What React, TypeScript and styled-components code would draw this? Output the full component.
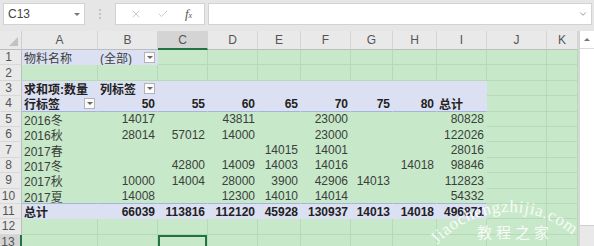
import React from 'react'
import styled, { createGlobalStyle } from 'styled-components'
import { Check, ChevronDown, X } from 'lucide-react'

const GlobalStyle = createGlobalStyle`
  html, body {
    margin: 0;
    padding: 0;
    background: #e6e6e6;
  }
  body {
    font-family: "Liberation Sans", "Noto Sans CJK SC", sans-serif;
  }
`

type Zone = 'blue' | 'plain' | 'grid'
type CellDef = { v: string; bold?: boolean; right?: boolean; dd?: boolean } | null

const COL_WIDTHS = [76, 60, 50, 50, 43, 50, 42, 44, 50, 60, 31]
const LETTERS = ['A', 'B', 'C', 'D', 'E', 'F', 'G', 'H', 'I', 'J', 'K']
const SELECTED_COL = 2
const SELECTED_ROW = 13

const n = (v: string): CellDef => ({ v, right: true })
const nb = (v: string): CellDef => ({ v, right: true, bold: true })
const t = (v: string): CellDef => ({ v })

const DATA: Record<number, CellDef[]> = {
  1: [t('物料名称'), { v: '(全部)', dd: true }],
  3: [{ v: '求和项:数量', bold: true }, { v: '列标签', bold: true, dd: true }],
  4: [
    { v: '行标签', bold: true, dd: true },
    nb('50'), nb('55'), nb('60'), nb('65'), nb('70'), nb('75'), nb('80'),
    { v: '总计', bold: true },
  ],
  5: [t('2016冬'), n('14017'), null, n('43811'), null, n('23000'), null, null, n('80828')],
  6: [t('2016秋'), n('28014'), n('57012'), n('14000'), null, n('23000'), null, null, n('122026')],
  7: [t('2017春'), null, null, null, n('14015'), n('14001'), null, null, n('28016')],
  8: [t('2017冬'), null, n('42800'), n('14009'), n('14003'), n('14016'), null, n('14018'), n('98846')],
  9: [t('2017秋'), n('10000'), n('14004'), n('28000'), n('3900'), n('42906'), n('14013'), null, n('112823')],
  10: [t('2017夏'), n('14008'), null, n('12300'), n('14010'), n('14014'), null, null, n('54332')],
  11: [
    { v: '总计', bold: true },
    nb('66039'), nb('113816'), nb('112120'), nb('45928'), nb('130937'), nb('14013'), nb('14018'), nb('496871'),
  ],
}

const zoneOf = (row: number, col: number): Zone => {
  if (row === 1 && col < 2) return 'blue'
  if ((row === 3 || row === 4 || row === 11) && col < 9) return 'blue'
  if (row >= 5 && row <= 10 && col < 9) return 'plain'
  return 'grid'
}

const Window = styled.div`
  position: relative;
  width: 594px;
  height: 246px;
  overflow: hidden;
  display: flex;
  flex-direction: column;
  background: #e6e6e6;
`

const FormulaBar = styled.div`
  height: 31px;
  flex: none;
  display: flex;
  align-items: flex-start;
  padding: 3px 2px 0 3px;
  box-sizing: border-box;
  gap: 3px;
`

const Box = styled.div<{ $w?: number }>`
  height: 22px;
  box-sizing: border-box;
  background: #fff;
  border: 1px solid #d2d2d2;
  display: flex;
  align-items: center;
  ${p => (p.$w ? `width: ${p.$w}px;` : 'flex: 1;')}
`

const NameText = styled.span`
  flex: 1;
  padding-left: 4px;
  font-size: 12px;
  color: #444;
`

const Caret = styled.span`
  width: 0;
  height: 0;
  margin-right: 4px;
  border-left: 3px solid transparent;
  border-right: 3px solid transparent;
  border-top: 3px solid #777;
`

const Grip = styled.div`
  width: 24px;
  height: 22px;
  display: flex;
  flex-direction: column;
  align-items: center;
  justify-content: center;
  gap: 2px;
`

const Dot = styled.span`
  width: 2px;
  height: 2px;
  background: #c4c4c4;
`

const Tools = styled(Box)`
  justify-content: space-around;
  padding: 0 4px 0 6px;
  color: #b4b4b4;
`

const Fx = styled.span`
  font-family: "Liberation Serif", serif;
  font-style: italic;
  font-size: 13px;
  color: #555;
  & > small {
    font-size: 8px;
  }
`

const FormulaInput = styled(Box)`
  justify-content: flex-end;
  padding-right: 3px;
  color: #666;
`

const Sheet = styled.div`
  flex: 1;
  display: flex;
  min-height: 0;
`

const Grid = styled.div`
  width: 578px;
  display: grid;
  grid-template-columns: 22px ${COL_WIDTHS.map(w => `${w}px`).join(' ')};
  grid-template-rows: 19px repeat(13, 15.4px);
  align-content: start;
`

const Corner = styled.div`
  background: #e9e9e9;
  border-right: 1px solid #cfcfcf;
  border-bottom: 1px solid #bdbdbd;
  box-sizing: border-box;
  display: flex;
  align-items: flex-end;
  justify-content: flex-end;
  padding: 0 3px 3px 0;
`

const CornerMark = styled.span`
  width: 0;
  height: 0;
  border-left: 9px solid transparent;
  border-bottom: 9px solid #c2c2c2;
`

const ColHead = styled.div<{ $active: boolean }>`
  box-sizing: border-box;
  display: flex;
  align-items: center;
  justify-content: center;
  font-size: 12px;
  color: #555;
  background: ${p => (p.$active ? '#d4d4d4' : '#e9e9e9')};
  border-right: 1px solid #d4d4d4;
  border-bottom: ${p => (p.$active ? '2px solid #217346' : '1px solid #bdbdbd')};
`

const RowHead = styled.div<{ $active: boolean }>`
  box-sizing: border-box;
  display: flex;
  align-items: center;
  justify-content: center;
  padding-right: 4px;
  font-size: 12px;
  color: #555;
  background: ${p => (p.$active ? '#d4d4d4' : '#e9e9e9')};
  border-bottom: 1px solid #d8d8d8;
  border-right: ${p => (p.$active ? '2px solid #217346' : '1px solid #bdbdbd')};
`

const Cell = styled.div<{
  $zone: Zone
  $right?: boolean
  $bold?: boolean
  $line?: string
  $selected?: boolean
}>`
  box-sizing: border-box;
  display: flex;
  align-items: center;
  justify-content: ${p => (p.$right ? 'flex-end' : 'space-between')};
  padding: 1px 2px 0;
  white-space: nowrap;
  font-size: 12px;
  font-weight: ${p => (p.$bold ? 700 : 400)};
  color: ${p => (p.$bold ? '#222' : '#3b3f3b')};
  background: ${p => (p.$zone === 'blue' ? '#dbe1f3' : '#c7e8c9')};
  border-right: 1px solid ${p => (p.$zone === 'grid' ? '#b6d9b8' : 'transparent')};
  border-bottom: 1px solid
    ${p => p.$line ?? (p.$zone === 'grid' ? '#b6d9b8' : 'transparent')};
  box-shadow: ${p => (p.$selected ? 'inset 0 0 0 2px #217346' : 'none')};
`

const DropButton = styled.span`
  width: 11px;
  height: 11px;
  box-sizing: border-box;
  background: #fbfbfb;
  border: 1px solid #b4b4b4;
  display: flex;
  align-items: center;
  justify-content: center;
  &::after {
    content: '';
    border-left: 3px solid transparent;
    border-right: 3px solid transparent;
    border-top: 3px solid #666;
  }
`

const Scrollbar = styled.div`
  flex: 1;
  display: flex;
  flex-direction: column;
  background: #e9e9e9;
  border-left: 2px solid #d6d6d6;
`

const ScrollUp = styled.div`
  height: 17px;
  background: #fff;
  border-bottom: 1px solid #dcdcdc;
  display: flex;
  align-items: center;
  justify-content: center;
  &::after {
    content: '';
    border-left: 3px solid transparent;
    border-right: 3px solid transparent;
    border-bottom: 3px solid #777;
  }
`

const Thumb = styled.div`
  height: 176px;
  background: #fff;
  border-bottom: 1px solid #cfcfcf;
`

const Watermark = styled.svg`
  position: absolute;
  left: 420px;
  top: 185px;
  overflow: visible;
  pointer-events: none;
`

const App: React.FC = () => {
  const rows = Array.from({ length: 13 }, (_, i) => i + 1)

  return (
    <Window>
      <GlobalStyle />
      <FormulaBar>
        <Box $w={82}>
          <NameText>C13</NameText>
          <Caret />
        </Box>
        <Grip>
          <Dot />
          <Dot />
          <Dot />
        </Grip>
        <Tools $w={90}>
          <X size={12} strokeWidth={1.4} />
          <Check size={12} strokeWidth={1.4} />
          <Fx>
            f<small>x</small>
          </Fx>
        </Tools>
        <FormulaInput>
          <ChevronDown size={10} strokeWidth={1.6} />
        </FormulaInput>
      </FormulaBar>

      <Sheet>
        <Grid>
          <Corner>
            <CornerMark />
          </Corner>
          {LETTERS.map((l, i) => (
            <ColHead key={l} $active={i === SELECTED_COL}>
              {l}
            </ColHead>
          ))}
          {rows.map(row => (
            <React.Fragment key={row}>
              <RowHead $active={row === SELECTED_ROW}>{row}</RowHead>
              {LETTERS.map((l, col) => {
                const def = DATA[row]?.[col] ?? null
                const zone = zoneOf(row, col)
                const line =
                  (row === 4 || row === 10) && col < 9 ? '#a3b4de' : undefined
                return (
                  <Cell
                    key={l}
                    $zone={zone}
                    $right={def?.right}
                    $bold={def?.bold}
                    $line={line}
                    $selected={row === SELECTED_ROW && col === SELECTED_COL}
                  >
                    {def && <span>{def.v}</span>}
                    {def?.dd && <DropButton />}
                  </Cell>
                )
              })}
            </React.Fragment>
          ))}
        </Grid>
        <Scrollbar>
          <ScrollUp />
          <Thumb />
        </Scrollbar>
      </Sheet>

      <Watermark width="174" height="61" viewBox="0 0 174 61">
        <defs>
          <path id="wm-arc" d="M -7 124 A 97 97 0 0 1 187 124" />
        </defs>
        <text
          fill="rgba(255,255,255,0.88)"
          fontFamily="'Liberation Serif', serif"
          fontSize="17"
        >
          <textPath href="#wm-arc" startOffset="70" textLength="150" lengthAdjust="spacing">
            Jiaochengzhijia.com
          </textPath>
        </text>
        <text
          x="57"
          y="53"
          fill="rgba(255,255,255,0.88)"
          fontFamily="'Noto Sans CJK SC', sans-serif"
          fontSize="15"
          letterSpacing="4"
        >
          教程之家
        </text>
      </Watermark>
    </Window>
  )
}

export default App
